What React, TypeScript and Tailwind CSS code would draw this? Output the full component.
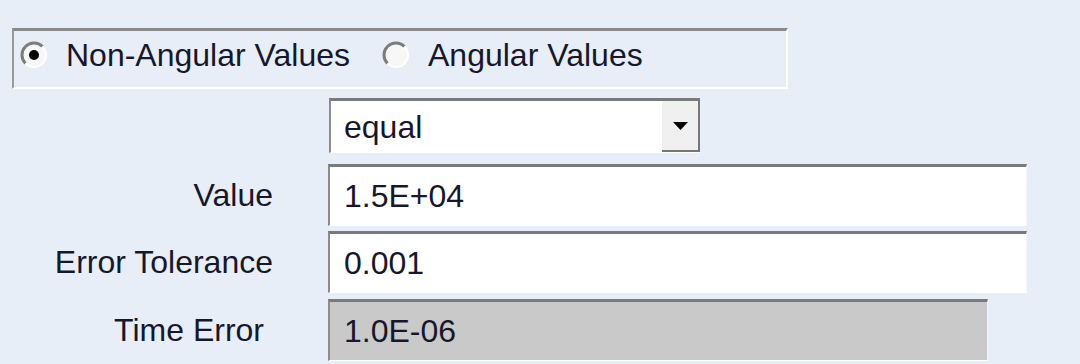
import React from 'react';

const FONT = "font-['Liberation_Sans',Arial,sans-serif] text-[32px] leading-none text-[#17172c]";

function Radio({ checked }: { checked?: boolean }) {
  return (
    <svg width="28" height="28" viewBox="0 0 28 28" className="shrink-0">
      <circle cx="14" cy="14" r="12" fill="#f7f7f7" />
      <path d="M22.49 5.51 A12 12 0 0 0 5.51 22.49" fill="none" stroke="#7c7c7c" strokeWidth="3" />
      <path d="M22.49 5.51 A12 12 0 0 1 5.51 22.49" fill="none" stroke="#ffffff" strokeWidth="2" />
      {checked && <circle cx="14" cy="14" r="5" fill="#000000" />}
    </svg>
  );
}

interface FieldRowProps {
  label: string;
  value: string;
  width: string;
  disabled?: boolean;
  labelPad?: string;
  spacing: string;
}

function FieldRow({ label, value, width, disabled, labelPad, spacing }: FieldRowProps) {
  return (
    <div className={`flex items-center h-[62px] ${spacing}`}>
      <div className={`w-[273px] text-right ${labelPad ?? ''}`}>{label}</div>
      <div
        className={`ml-[55px] ${width} h-full flex items-center pl-[14px] border-t-[3px] border-l-2 border-t-[#7a7a7a] border-l-[#8c8c8c] border-b border-r border-b-white border-r-[#f4f6f9] ${
          disabled ? 'bg-[#c9c9c9]' : 'bg-white'
        }`}
      >
        {value}
      </div>
    </div>
  );
}

export default function App() {
  return (
    <div className={`w-[1080px] h-[364px] overflow-hidden bg-[#e7eef8] pt-[28px] ${FONT}`}>
      {/* Angle type group */}
      <div className="ml-[12px] w-[776px] h-[61px] flex items-center pb-[8px] pl-[6px] border-t-[3px] border-l-2 border-t-[#8a8a8a] border-l-[#999999] border-b-2 border-r-2 border-b-white border-r-white">
        <Radio checked />
        <span className="ml-[18px]">Non-Angular Values</span>
        <span className="ml-[32px]">
          <Radio />
        </span>
        <span className="ml-[18px]">Angular Values</span>
      </div>

      {/* Comparison dropdown */}
      <div className="ml-[329px] mt-[9px] w-[371px] h-[55px] flex bg-white border-t-[3px] border-l-2 border-t-[#7a7a7a] border-l-[#8c8c8c] border-b border-b-white">
        <div className="flex-1 flex items-center pl-[13px]">equal</div>
        <div className="w-[38px] h-full flex items-center justify-center bg-[#f0f0f0] border-r-2 border-b-2 border-r-[#777777] border-b-[#777777]">
          <svg width="15" height="8" viewBox="0 0 15 8">
            <polygon points="0,0 15,0 7.5,8" fill="#000000" />
          </svg>
        </div>
      </div>

      <FieldRow label="Value" value="1.5E+04" width="w-[699px]" spacing="mt-[11px]" />
      <FieldRow label="Error Tolerance" value="0.001" width="w-[699px]" spacing="mt-[5px]" />
      <FieldRow label="Time Error" value="1.0E-06" width="w-[660px]" spacing="mt-[6px]" disabled labelPad="pr-[9px]" />
    </div>
  );
}
